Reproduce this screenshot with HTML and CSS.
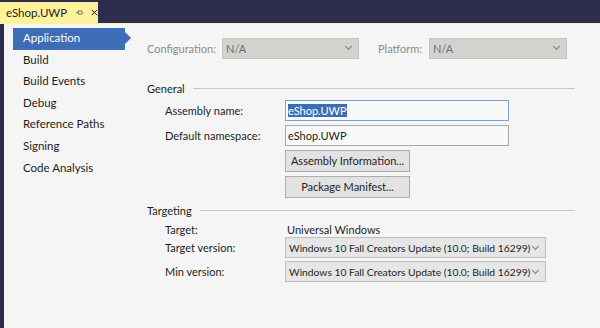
FILE: index.html
```html
<!DOCTYPE html>
<html lang="en">
<head>
    <meta charset="UTF-8">
    <title>eShop.UWP</title>
    <link rel="stylesheet" href="styles.css">
</head>
<body>
    <div class="tabbar">
        <div class="tab">
            <span class="tab-title">eShop.UWP</span>
            <svg class="tab-pin" width="9" height="9" viewBox="0 0 9 9">
                <path d="M0 4.5h3M3 2v5M3 2.5h5M3 6.5h5M8 2.5v4" stroke="#5a5a3a" fill="none" stroke-width="1"/>
            </svg>
            <svg class="tab-close" width="9" height="9" viewBox="0 0 9 9">
                <path d="M1 1l7 7M8 1l-7 7" stroke="#1e1e1e" stroke-width="1.3"/>
            </svg>
        </div>
    </div>

    <div class="page">
        <ul class="nav">
            <li class="active">Application</li>
            <li>Build</li>
            <li>Build Events</li>
            <li>Debug</li>
            <li>Reference Paths</li>
            <li>Signing</li>
            <li>Code Analysis</li>
        </ul>

        <div class="content">
            <div class="config-row">
                <span class="muted config-label">Configuration:</span>
                <div class="combo disabled config-combo"><span>N/A</span><i class="chev"></i></div>
                <span class="muted platform-label">Platform:</span>
                <div class="combo disabled platform-combo"><span>N/A</span><i class="chev"></i></div>
            </div>

            <div class="group-head general-head"><span>General</span><div class="rule"></div></div>
            <div class="fields">
                <label>Assembly name:</label>
                <div class="textbox focused"><span class="sel">eShop.UWP</span></div>
                <label>Default namespace:</label>
                <div class="textbox">eShop.UWP</div>
                <span></span>
                <div class="button">Assembly Information...</div>
                <span></span>
                <div class="button">Package Manifest...</div>
            </div>

            <div class="group-head targeting-head"><span>Targeting</span><div class="rule"></div></div>
            <div class="fields targeting">
                <label>Target:</label>
                <div class="plain">Universal Windows</div>
                <label>Target version:</label>
                <div class="combo version"><span>Windows 10 Fall Creators Update (10.0; Build 16299)</span><i class="chev"></i></div>
                <label>Min version:</label>
                <div class="combo version"><span>Windows 10 Fall Creators Update (10.0; Build 16299)</span><i class="chev"></i></div>
            </div>
        </div>
    </div>
</body>
</html>
```

FILE: styles.css
```css
body {
    margin: 0;
    width: 600px;
    height: 328px;
    overflow: hidden;
    font-family: Lato, "Liberation Sans", sans-serif;
    font-size: 11px;
    color: #1e1e1e;
    background-color: #2d2e4e;
    white-space: nowrap;
}
.tabbar {
    height: 21px;
    padding-top: 2px;
    border-bottom: 1px solid #fff29d;
    display: flex;
}
.tab {
    width: 98px;
    background-color: #fff29d;
    display: flex;
    align-items: center;
    padding-left: 6px;
    box-sizing: border-box;
}
.tab-title {
    font-size: 11.5px;
    margin-right: 9px;
}
.tab-pin {
    margin-right: 8px;
}
.page {
    display: flex;
    height: 304px;
    margin-left: 4px;
    background-color: #f5f5f5;
}
.nav {
    list-style: none;
    margin: 0;
    padding: 4px 0 0 9px;
    width: 143px;
    box-sizing: border-box;
    font-size: 11.5px;
}
.nav li {
    height: 21.6px;
    line-height: 20px;
    padding-left: 10px;
    width: 112px;
    box-sizing: border-box;
}
.nav li.active {
    position: relative;
    background-color: #3c6db5;
    color: #fff;
}
.nav li.active::after {
    content: "";
    position: absolute;
    right: -6px;
    top: 4px;
    border-left: 6px solid #3c6db5;
    border-top: 6px solid transparent;
    border-bottom: 6px solid transparent;
}
.content {
    flex: 1;
    padding-top: 14px;
}
.muted {
    color: #8c8c8c;
}
.config-row {
    display: flex;
    align-items: center;
    height: 20px;
}
.config-label {
    width: 75px;
}
.combo {
    height: 21px;
    box-sizing: border-box;
    border: 1px solid #c9c9c9;
    background-color: #ececec;
    display: flex;
    align-items: center;
    padding: 0 7px 0 3px;
    justify-content: space-between;
}
.combo.disabled {
    background-color: #d4d2cf;
    border-color: #c8c6c2;
    color: #6f6f6f;
}
.config-combo {
    width: 137px;
}
.platform-label {
    margin-left: 19px;
    width: 51px;
}
.platform-combo {
    width: 138px;
}
.chev {
    flex: none;
    width: 4px;
    height: 4px;
    border-right: 1px solid #7a7a7a;
    border-bottom: 1px solid #7a7a7a;
    transform: rotate(45deg);
    margin-top: -3px;
}
.group-head {
    display: flex;
    align-items: center;
}
.general-head {
    margin-top: 24px;
}
.targeting-head {
    margin-top: 6px;
}
.rule {
    flex: 1;
    height: 1px;
    background-color: #c6c6c6;
    margin: 0 25px 0 8px;
}
.fields {
    display: grid;
    grid-template-columns: 120px 224px;
    row-gap: 4px;
    align-items: center;
    padding-left: 18px;
    margin-top: 5px;
}
.textbox {
    height: 21px;
    box-sizing: border-box;
    border: 1px solid #a7a7a7;
    background-color: #f9f9f9;
    padding: 0 2px;
    line-height: 19px;
}
.textbox.focused {
    border-color: #7a9fd6;
}
.sel {
    background-color: #3c6db5;
    color: #fff;
}
.button {
    width: 125px;
    height: 22px;
    box-sizing: border-box;
    border: 1px solid #adadad;
    background-color: #e2e2e2;
    text-align: center;
    line-height: 20px;
}
.targeting {
    grid-template-columns: 120px 261px;
    grid-template-rows: 10px 21px 21px;
    row-gap: 3px;
    margin-top: 7px;
}
.plain {
    padding-left: 2px;
}
.version {
    background-color: #e6e6e6;
    border-color: #bdbdbd;
    font-size: 10.3px;
}
```
